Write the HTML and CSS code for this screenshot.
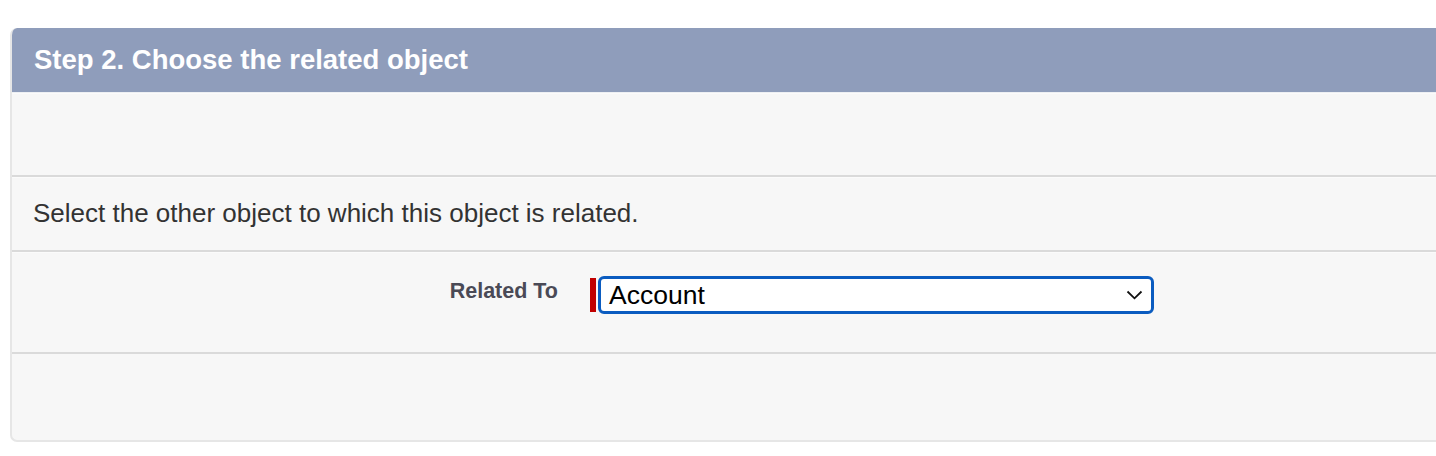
FILE: index.html
```html
<!DOCTYPE html>
<html>
<head>
<meta charset="utf-8">
<link rel="stylesheet" href="styles.css">
</head>
<body>
<div class="card">
  <div class="card-header">Step 2. Choose the related object</div>
  <div class="section section-empty"></div>
  <div class="section section-info">Select the other object to which this object is related.</div>
  <div class="section section-field">
    <div class="field-label">Related To</div>
    <div class="field-control">
      <span class="required-bar"></span>
      <div class="select">
        <span class="select-value">Account</span>
        <svg class="chevron" width="17" height="10" viewBox="0 0 17 10"><path d="M1.5 1.5 L8.5 8.3 L15.5 1.5" fill="none" stroke="#111" stroke-width="1.8"/></svg>
      </div>
    </div>
  </div>
  <div class="section section-bottom"></div>
</div>
</body>
</html>
```
FILE: styles.css
```css
html, body { margin: 0; padding: 0; background: #fff; }
body { padding: 28px 0 0 10px; font-family: "Liberation Sans", Arial, sans-serif; }
.card {
  width: 1440px;
  border: 2px solid #e6e6e6;
  border-top: none;
  border-right: none;
  border-radius: 7px 0 0 7px;
  background: #f7f7f7;
  overflow: hidden;
}
.card-header {
  background: #8f9dbb;
  color: #fff;
  font-weight: bold;
  font-size: 27.5px;
  height: 64px;
  line-height: 64px;
  padding-left: 24px;
  border-radius: 7px 0 0 0;
  margin-left: -2px;
  border-bottom: 1px solid #eef0f3;
}
.section { border-bottom: 2px solid #dadada; box-shadow: inset 0 1px 0 #fbfbfb; box-sizing: border-box; }
.section-empty { height: 84px; }
.section-info {
  height: 75px;
  padding: 21px 0 0 21px;
  font-size: 26px;
  color: #333;
}
.section-field {
  height: 102px;
  display: flex;
  align-items: flex-start;
  padding-top: 24px;
}
.field-label {
  width: 546px;
  text-align: right;
  font-weight: bold;
  font-size: 21.5px;
  color: #4a4a56;
  padding-top: 3px;
}
.field-control { display: flex; align-items: center; margin-left: 32px; }
.required-bar { width: 6px; height: 34px; background: #c10000; margin-right: 2px; }
.select {
  width: 556px;
  height: 38px;
  box-sizing: border-box;
  border: 3px solid #0b5cc0;
  border-radius: 6px;
  background: #fff;
  display: flex;
  align-items: center;
  justify-content: space-between;
  padding: 0 8px 0 8px;
}
.select-value { font-size: 26.5px; color: #000; }
.chevron { display: block; }
.section-bottom { height: 86px; border-bottom: none; box-shadow: none; }
```
